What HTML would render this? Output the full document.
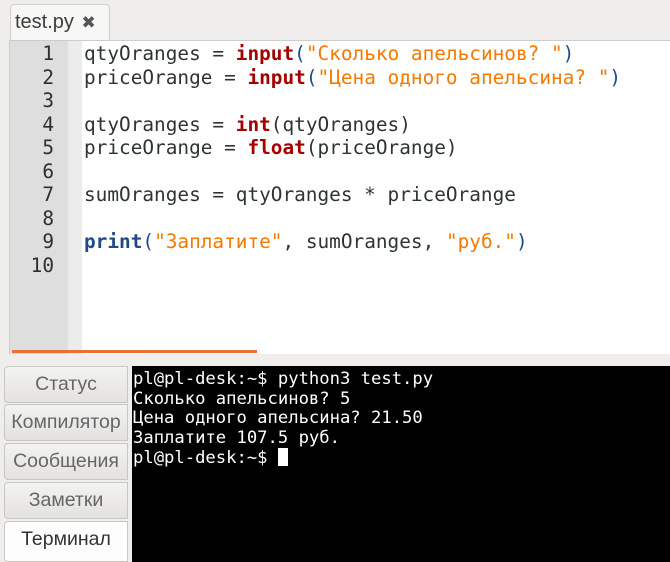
<!DOCTYPE html>
<html><head><meta charset="utf-8"><style>
*{margin:0;padding:0;box-sizing:border-box}
body{width:670px;height:562px;overflow:hidden;background:#efeeed;position:relative;font-family:"Liberation Sans","DejaVu Sans",sans-serif}
.tab{position:absolute;left:10px;top:4px;width:100px;height:37px;background:#f7f7f6;border:1px solid #cfcdca;border-bottom:none;border-radius:4px 4px 0 0;font-size:20px;color:#3c3c3c;padding:6px 0 0 4px}
.tab b{font-size:17px;color:#555;margin-left:2px}
.editor{position:absolute;left:9px;top:40px;width:661px;height:314px;background:#fff;border-top:1px solid #cfcdca;border-left:1px solid #cfcdca}
.g1{position:absolute;left:0;top:0;width:58px;height:100%;background:#dedede}
.g2{position:absolute;left:58px;top:0;width:14px;height:100%;background:#ececec}
.code{position:absolute;top:1px;font-family:"DejaVu Sans Mono",monospace;font-size:19.4px;line-height:23.5px;white-space:pre}
.nums{left:0;width:44px;text-align:right;color:#2e2e2e}
.src{left:74px;color:#2e3436}
.k{color:#a40000;font-weight:bold}
.p{color:#204a87;font-weight:bold}
.s{color:#f57900}
.b{color:#204a87}
.orange{position:absolute;left:12px;top:350px;width:245px;height:3px;background:#ec6f3a}
.side{position:absolute;left:4px;width:124px;height:37px;background:linear-gradient(#f3f3f2,#e3e2e0);border:1px solid #c9c7c4;border-radius:4px 0 0 4px;font-size:19.5px;color:#666;text-align:center;line-height:35px;white-space:nowrap}
.term{position:absolute;left:132px;top:366px;width:538px;height:196px;background:#000;color:#fff;font-family:"DejaVu Sans Mono",monospace;font-size:17.2px;line-height:19.5px;white-space:pre;padding:4px 0 0 1px}
.cur{display:inline-block;width:10px;height:18px;background:#fff;vertical-align:-3px}
</style></head><body>
<div class="tab">test.py <b>✖</b></div>
<div class="editor">
<div class="g1"></div><div class="g2"></div>
<div class="code nums">1
2
3
4
5
6
7
8
9
10</div>
<div class="code src">qtyOranges = <span class="k">input</span><span class="b">(</span><span class="s">"Сколько апельсинов? "</span><span class="b">)</span>
priceOrange = <span class="k">input</span><span class="b">(</span><span class="s">"Цена одного апельсина? "</span><span class="b">)</span>

qtyOranges = <span class="k">int</span>(qtyOranges)
priceOrange = <span class="k">float</span>(priceOrange)

sumOranges = qtyOranges * priceOrange

<span class="p">print</span><span class="b">(</span><span class="s">"Заплатите"</span>, sumOranges, <span class="s">"руб."</span><span class="b">)</span>
</div>
</div>
<div class="orange"></div>
<div class="side" style="top:366px">Статус</div>
<div class="side" style="top:404px">Компилятор</div>
<div class="side" style="top:443px">Сообщения</div>
<div class="side" style="top:482px">Заметки</div>
<div class="side" style="top:521px;height:41px;background:#fdfdfd;color:#333">Терминал</div>
<div class="term">pl@pl-desk:~$ python3 test.py
Сколько апельсинов? 5
Цена одного апельсина? 21.50
Заплатите 107.5 руб.
pl@pl-desk:~$ <span class="cur"></span></div>
</body></html>
